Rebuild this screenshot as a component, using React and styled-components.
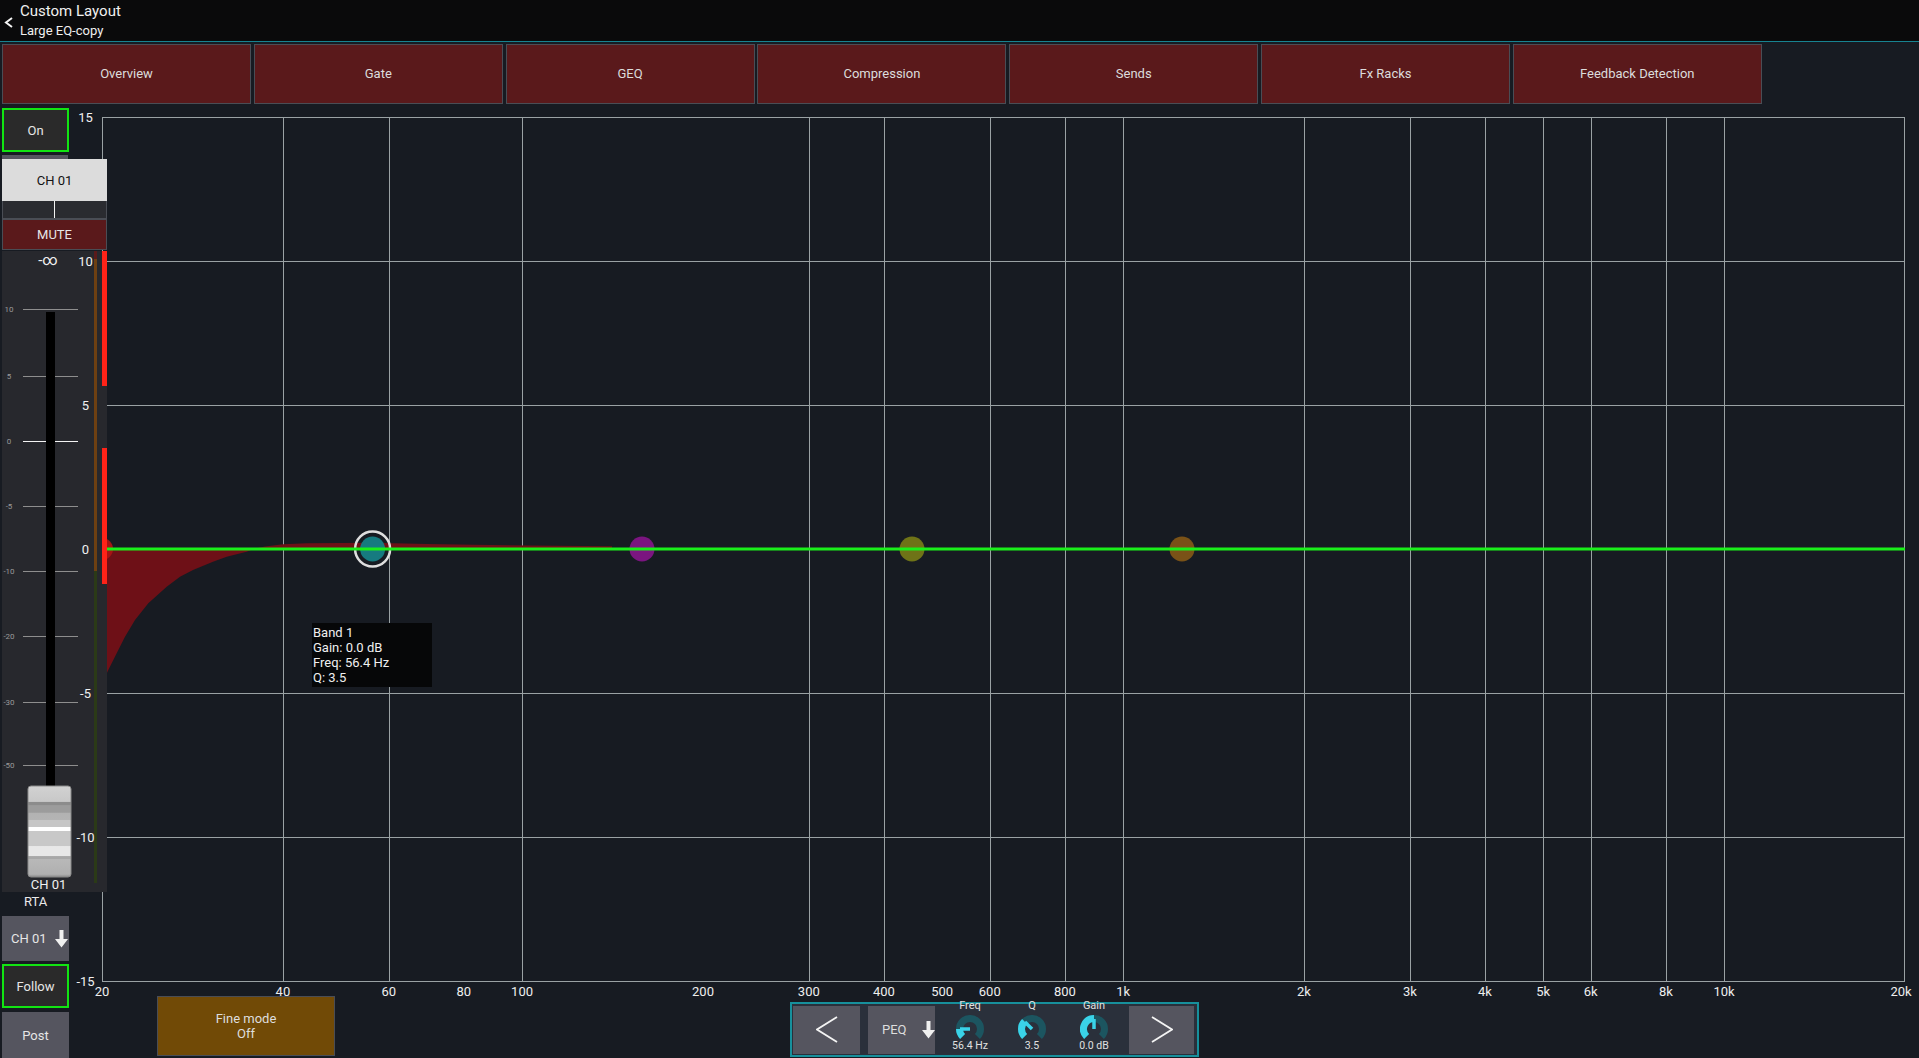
import React from 'react';
import styled, { createGlobalStyle } from 'styled-components';

const GlobalStyle = createGlobalStyle`
  html, body { margin: 0; padding: 0; background: #171b22; overflow: hidden; }
  body { font-family: Roboto, "Liberation Sans", Arial, sans-serif; color: #e8e8e8; }
  * { box-sizing: border-box; }
`;

const Screen = styled.div`
  width: 1919px;
  height: 1058px;
  display: flex;
  flex-direction: column;
  background: #171b22;
  overflow: hidden;
`;

const Header = styled.header`
  height: 42px;
  flex-shrink: 0;
  background: #0a0a0b;
  border-bottom: 1px solid #178391;
  display: flex;
  align-items: center;
  gap: 7px;
  padding-left: 4px;
`;

const BackIcon = styled.svg`
  width: 9px;
  height: 11px;
  margin-top: 3px;
`;

const TitleBlock = styled.div`
  display: flex;
  flex-direction: column;
  color: #f0f0f0;
`;

const Title = styled.div`
  font-size: 15px;
  line-height: 20px;
`;

const Subtitle = styled.div`
  font-size: 13px;
  line-height: 20px;
`;

const TabBar = styled.nav`
  display: flex;
  gap: 2.8px;
  padding: 2px 0 0 2px;
  height: 62px;
  flex-shrink: 0;
`;

const Tab = styled.div`
  width: 249px;
  height: 60px;
  padding-bottom: 1px;
  background: #5a191b;
  border: 1px solid #4a4d55;
  color: #dcdcdc;
  font-size: 13px;
  display: flex;
  align-items: center;
  justify-content: center;
`;

const Body = styled.div`
  display: flex;
  flex: 1;
  min-height: 0;
`;

const Sidebar = styled.aside`
  width: 107px;
  flex-shrink: 0;
  padding-left: 2px;
  display: flex;
  flex-direction: column;
  position: relative;
  z-index: 1;
`;

const SideButton = styled.div`
  width: 67px;
  height: ${p => p.$h}px;
  margin-top: ${p => p.$mt}px;
  background: ${p => (p.$toggle ? '#2a2a2a' : '#55555f')};
  border: ${p => (p.$toggle ? '2px solid #12e412' : 'none')};
  color: #e6e6e6;
  font-size: 13px;
  display: flex;
  align-items: center;
  justify-content: ${p => (p.$icon ? 'flex-start' : 'center')};
  padding-left: ${p => (p.$icon ? '9px' : '0')};
  gap: 8px;
`;

const HiddenStrip = styled.div`
  width: 66px;
  height: 4px;
  margin-top: 3px;
  background: #55555f;
`;

const ChannelName = styled.div`
  width: 105px;
  height: 42px;
  background: #dcdcdc;
  color: #111;
  font-size: 13px;
  display: flex;
  align-items: center;
  justify-content: center;
`;

const PanStrip = styled.div`
  width: 105px;
  height: 18px;
  background: #2a2b30;
  border: 1px solid #4a4d55;
  border-top: none;
  display: flex;
  justify-content: center;
`;

const PanMark = styled.div`
  width: 1px;
  height: 100%;
  background: #f2f2f2;
`;

const MuteButton = styled.div`
  width: 105px;
  height: 31px;
  background: #5a191b;
  border: 1px solid #4a4d55;
  color: #e6e6e6;
  font-size: 13px;
  display: flex;
  align-items: center;
  justify-content: center;
`;

const FaderPanel = styled.div`
  width: 105px;
  height: 641px;
  margin-top: 1px;
  background: #27282d;
`;

const FaderSvg = styled.svg`
  display: block;
  width: 105px;
  height: 641px;
`;

const RtaLabel = styled.div`
  width: 67px;
  height: 20px;
  line-height: 20px;
  text-align: center;
  font-size: 13px;
  color: #eaeaea;
`;

const ChartArea = styled.main`
  flex: 1;
  margin-left: -48px;
  position: relative;
  display: flex;
  flex-direction: column;
`;

const PlotSvg = styled.svg`
  display: block;
  width: 1860px;
  height: 904px;
  flex-shrink: 0;
`;

const AxisOverlay = styled.svg`
  position: absolute;
  top: 0;
  left: 0;
  width: 1860px;
  height: 904px;
  z-index: 2;
  pointer-events: none;
`;

const Tooltip = styled.div`
  position: absolute;
  left: 253px;
  top: 519px;
  width: 120px;
  height: 64px;
  padding: 2px 0 0 1px;
  background: #060708;
  color: #f0f0f0;
  font-size: 13px;
  line-height: 15px;
  z-index: 3;
`;

const BottomRow = styled.div`
  display: flex;
  align-items: flex-start;
  height: 62px;
  margin-top: -12px;
  flex-shrink: 0;
`;

const FineModeButton = styled.div`
  margin-left: 98px;
  width: 178px;
  height: 60px;
  background: #714a06;
  border: 1px solid #4a4d55;
  color: #dedede;
  font-size: 13px;
  line-height: 15px;
  display: flex;
  flex-direction: column;
  align-items: center;
  justify-content: center;
`;

const BandControl = styled.div`
  margin-left: 455px;
  margin-top: 6px;
  width: 409px;
  height: 55px;
  border: 2px solid #17909c;
  background: #2a303b;
  display: flex;
  align-items: center;
  padding-left: 1px;
`;

const PanelButton = styled.div`
  width: ${p => p.$w}px;
  height: 48px;
  margin-left: ${p => p.$ml || 0}px;
  background: #55555f;
  color: #dedede;
  font-size: 13px;
  display: flex;
  align-items: center;
  justify-content: ${p => (p.$icon ? 'flex-start' : 'center')};
  padding-left: ${p => (p.$icon ? '14px' : '0')};
  gap: 15px;
`;

const KnobCell = styled.div`
  width: 62px;
  margin-left: ${p => p.$ml || 0}px;
  align-self: flex-start;
  margin-top: -3px;
  display: flex;
  flex-direction: column;
  align-items: center;
`;

const KnobLabel = styled.div`
  font-size: 11px;
  line-height: 10px;
  color: #e0e0e0;
`;

const KnobSvg = styled.svg`
  width: 28px;
  height: 28px;
  margin-top: 4px;
  display: block;
`;

const KnobValue = styled.div`
  font-size: 10.5px;
  line-height: 10px;
  margin-top: -2px;
  color: #e0e0e0;
`;

const Chevron = styled.svg`
  width: 22px;
  height: 27px;
`;

const DownArrow = () => (
  <svg width="13" height="18" viewBox="0 0 13 18">
    <path d="M4.5 0 H8.5 V9 H13 L6.5 17.5 L0 9 H4.5 Z" fill="#f0f0f0" />
  </svg>
);

const tabs = ['Overview', 'Gate', 'GEQ', 'Compression', 'Sends', 'Fx Racks', 'Feedback Detection'];

const fx = f => 102 + 601 * Math.log10(f / 20);
const gridFreqs = [40, 60, 100, 300, 400, 600, 800, 1000, 2000, 3000, 4000, 5000, 6000, 8000, 10000];
const freqLabels = [
  [20, '20'], [40, '40'], [60, '60'], [80, '80'], [100, '100'], [200, '200'], [300, '300'],
  [400, '400'], [500, '500'], [600, '600'], [800, '800'], [1000, '1k'], [2000, '2k'], [3000, '3k'],
  [4000, '4k'], [5000, '5k'], [6000, '6k'], [8000, '8k'], [10000, '10k'], [20000, '20k'],
];
const dbLabels = ['15', '10', '5', '0', '-5', '-10', '-15'];
const bands = [
  { x: 372.6, color: '#167b80' },
  { x: 642, color: '#7b1580' },
  { x: 912, color: '#6f7317' },
  { x: 1182, color: '#7a5217' },
];

const scaleMarks = [
  { label: '10', y: 58 }, { label: '5', y: 125 }, { label: '0', y: 190, zero: true },
  { label: '-5', y: 255 }, { label: '-10', y: 320 }, { label: '-20', y: 385 },
  { label: '-30', y: 451 }, { label: '-50', y: 514 },
];

const lowCut =
  'M102,549 L253,549.3 L246.7,551.7 L226.7,556.7 L213,561.7 L193,570 L180,576.7 L166.7,586.7 L148.3,603.3 L135,620 L125,636.7 L116.7,653.3 L108.3,670 L102,684 Z';
const bump =
  'M253,549 L265,546.5 L283,544.3 L307,543.3 L372,542.8 L427,544 L473,544.7 L530,545.5 L612,546.2 L612,549 Z';

const polar = (cx, cy, r, deg) => {
  const a = (deg * Math.PI) / 180;
  return [cx + r * Math.sin(a), cy - r * Math.cos(a)];
};
const arc = (cx, cy, r, a0, a1) => {
  const [x0, y0] = polar(cx, cy, r, a0);
  const [x1, y1] = polar(cx, cy, r, a1);
  const large = a1 - a0 > 180 ? 1 : 0;
  return `M${x0.toFixed(2)},${y0.toFixed(2)} A${r},${r} 0 ${large} 1 ${x1.toFixed(2)},${y1.toFixed(2)}`;
};

const Knob = ({ value }) => {
  const end = -135 + 270 * value;
  const [ix, iy] = polar(14, 14, 10, end);
  return (
    <KnobSvg viewBox="0 0 28 28">
      <path d={arc(14, 14, 10.5, -135, 135)} stroke="#1c5560" strokeWidth="7" fill="none" />
      <path d={arc(14, 14, 10.5, -135, end)} stroke="#3ad3e8" strokeWidth="7" fill="none" />
      <line x1="14" y1="14" x2={ix} y2={iy} stroke="#3ad3e8" strokeWidth="3.5" />
    </KnobSvg>
  );
};

const knobs = [
  { label: 'Freq', value: '56.4 Hz', v: 0.167 },
  { label: 'Q', value: '3.5', v: 0.333 },
  { label: 'Gain', value: '0.0 dB', v: 0.5 },
];

const Fader = () => (
  <FaderSvg viewBox="0 0 105 641">
    <defs>
      <linearGradient id="knobGrad" x1="0" y1="0" x2="0" y2="1">
        <stop offset="0" stopColor="#d2d2d2" />
        <stop offset="0.17" stopColor="#c8c8c8" />
        <stop offset="0.175" stopColor="#8c8c8c" />
        <stop offset="0.21" stopColor="#8c8c8c" />
        <stop offset="0.215" stopColor="#9c9c9c" />
        <stop offset="0.29" stopColor="#9c9c9c" />
        <stop offset="0.295" stopColor="#b2b2b2" />
        <stop offset="0.37" stopColor="#b4b4b4" />
        <stop offset="0.375" stopColor="#c6c6c6" />
        <stop offset="0.45" stopColor="#c6c6c6" />
        <stop offset="0.455" stopColor="#ffffff" />
        <stop offset="0.49" stopColor="#ffffff" />
        <stop offset="0.495" stopColor="#c8c8c8" />
        <stop offset="0.66" stopColor="#c8c8c8" />
        <stop offset="0.665" stopColor="#e8e8e8" />
        <stop offset="0.77" stopColor="#e8e8e8" />
        <stop offset="0.775" stopColor="#a8a8a8" />
        <stop offset="0.8" stopColor="#a8a8a8" />
        <stop offset="0.805" stopColor="#b8b8b8" />
        <stop offset="0.97" stopColor="#b0b0b0" />
        <stop offset="1" stopColor="#8a8a8a" />
      </linearGradient>
    </defs>
    <text x="46" y="14" fill="#f0f0f0" fontSize="15" textAnchor="middle">-∞</text>
    {scaleMarks.map(m => (
      <g key={m.label}>
        <text x="7" y={m.y + 3} fill="#9a9a9a" fontSize="8" textAnchor="middle">{m.label}</text>
        <line x1="21" x2="76" y1={m.y + 0.5} y2={m.y + 0.5} stroke={m.zero ? '#f4f4f4' : '#8e8e8e'} strokeWidth="1" />
      </g>
    ))}
    <rect x="44" y="61" width="9" height="476" fill="#000" />
    <rect x="26" y="535" width="43" height="91" rx="3" fill="url(#knobGrad)" stroke="#8a8a8a" strokeWidth="1" />
    <text x="46.5" y="638" fill="#f0f0f0" fontSize="13" textAnchor="middle">CH 01</text>
    <rect x="92" y="0" width="3" height="8" fill="#5a1a1a" />
    <rect x="92" y="8" width="3" height="312" fill="#6e4012" />
    <rect x="92" y="320" width="3" height="312" fill="#2b3a17" />
    <rect x="100" y="0" width="5" height="135" fill="#ff2318" />
    <rect x="100" y="197" width="5" height="136" fill="#ff2318" />
  </FaderSvg>
);

const Plot = () => (
  <PlotSvg viewBox="59 104 1860 904">
    <rect x="102.5" y="117.5" width="1802" height="864" fill="#171b22" stroke="#9aa2a4" strokeWidth="1" />
    {[1, 2, 3, 4, 5].map(i => (
      <line key={i} x1="102" x2="1905" y1={117.5 + 144 * i} y2={117.5 + 144 * i} stroke="#9aa2a4" strokeWidth="1" />
    ))}
    {gridFreqs.map(f => {
      const x = Math.round(fx(f)) + 0.5;
      return <line key={f} x1={x} x2={x} y1="117" y2="981" stroke="#9aa2a4" strokeWidth="1" />;
    })}
    {freqLabels.map(([f, l]) => (
      <text key={l} x={Math.min(fx(f), 1901)} y="996" fill="#eeeeee" fontSize="13" textAnchor="middle">{l}</text>
    ))}
    <path d={lowCut} fill="#6e1017" />
    <path d={bump} fill="#6e1017" />
    <circle cx="102" cy="549" r="11" fill="#a51414" />
    {bands.map(b => (
      <circle key={b.x} cx={b.x} cy="549" r="12.5" fill={b.color} />
    ))}
    <circle cx="372.6" cy="549" r="17.5" fill="none" stroke="#dedede" strokeWidth="2.5" />
    <line x1="102" x2="1905" y1="549" y2="549" stroke="#1aef1a" strokeWidth="3" />
  </PlotSvg>
);

export default function App() {
  return (
    <Screen>
      <GlobalStyle />
      <Header>
        <BackIcon viewBox="0 0 9 11">
          <polyline points="8,1 2,5.5 8,10" fill="none" stroke="#f4f4f4" strokeWidth="2" />
        </BackIcon>
        <TitleBlock>
          <Title>Custom Layout</Title>
          <Subtitle>Large EQ-copy</Subtitle>
        </TitleBlock>
      </Header>
      <TabBar>
        {tabs.map(t => (
          <Tab key={t}>{t}</Tab>
        ))}
      </TabBar>
      <Body>
        <Sidebar>
          <SideButton $toggle $h={44} $mt={4}>On</SideButton>
          <HiddenStrip />
          <ChannelName>CH 01</ChannelName>
          <PanStrip>
            <PanMark />
          </PanStrip>
          <MuteButton>MUTE</MuteButton>
          <FaderPanel>
            <Fader />
          </FaderPanel>
          <RtaLabel>RTA</RtaLabel>
          <SideButton $icon $h={45} $mt={4}>
            CH 01 <DownArrow />
          </SideButton>
          <SideButton $toggle $h={44} $mt={3}>Follow</SideButton>
          <SideButton $h={46} $mt={4}>Post</SideButton>
        </Sidebar>
        <ChartArea>
          <Plot />
          <AxisOverlay viewBox="59 104 1860 904">
            {dbLabels.map((l, i) => (
              <text key={l} x="85.5" y={117 + 144 * i + 4.7} fill="#f0f0f0" fontSize="13" textAnchor="middle">{l}</text>
            ))}
          </AxisOverlay>
          <Tooltip>
            <div>Band 1</div>
            <div>Gain: 0.0 dB</div>
            <div>Freq: 56.4 Hz</div>
            <div>Q: 3.5</div>
          </Tooltip>
          <BottomRow>
            <FineModeButton>
              <span>Fine mode</span>
              <span>Off</span>
            </FineModeButton>
            <BandControl>
              <PanelButton $w={67}>
                <Chevron viewBox="0 0 22 27">
                  <polyline points="21,1 1,13.5 21,26" fill="none" stroke="#f4f4f4" strokeWidth="1.8" />
                </Chevron>
              </PanelButton>
              <PanelButton $w={67} $ml={8} $icon>
                PEQ <DownArrow />
              </PanelButton>
              {knobs.map((k, i) => (
                <KnobCell key={k.label} $ml={i === 0 ? 4 : 0}>
                  <KnobLabel>{k.label}</KnobLabel>
                  <Knob value={k.v} />
                  <KnobValue>{k.value}</KnobValue>
                </KnobCell>
              ))}
              <PanelButton $w={65} $ml={4}>
                <Chevron viewBox="0 0 22 27">
                  <polyline points="1,1 21,13.5 1,26" fill="none" stroke="#f4f4f4" strokeWidth="1.8" />
                </Chevron>
              </PanelButton>
            </BandControl>
          </BottomRow>
        </ChartArea>
      </Body>
    </Screen>
  );
}
